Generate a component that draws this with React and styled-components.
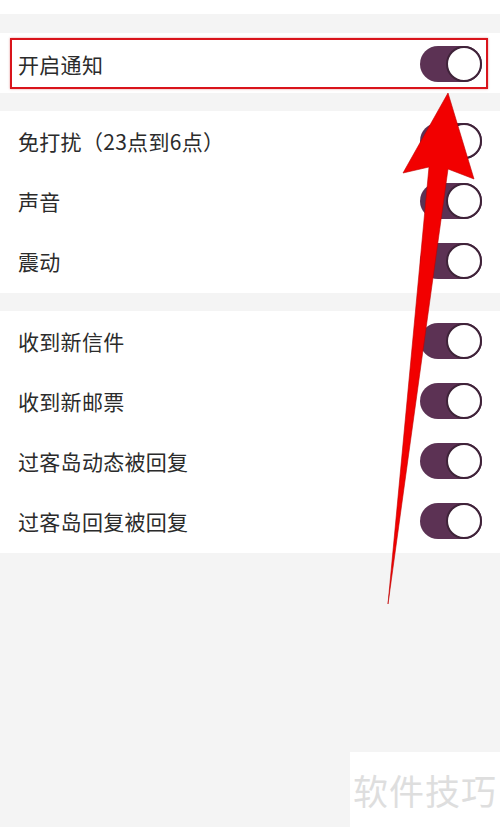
import React from 'react';
import styled, { createGlobalStyle } from 'styled-components';

const GlobalStyle = createGlobalStyle`
  html, body {
    margin: 0;
    padding: 0;
    background: #f4f4f4;
    font-family: "Noto Sans CJK SC", "Noto Sans", sans-serif;
  }
  #root {
    min-height: 827px;
  }
`;

const Page = styled.div`
  position: relative;
  width: 500px;
  min-height: 827px;
  background: #f4f4f4;
  overflow: hidden;
`;

const TopStrip = styled.div`
  height: 14px;
  background: #ffffff;
  margin-bottom: 19px;
`;

const Section = styled.div`
  background: #ffffff;
  margin-bottom: 18px;
  padding: ${(p) => (p.$highlight ? '5px 12px 4px 10px' : '0 0 2px')};
`;

const HighlightBox = styled.div`
  border: 2px solid #d9141b;
  box-shadow: 0 0 2px rgba(200, 40, 40, 0.5);
`;

const Row = styled.div`
  display: flex;
  align-items: center;
  justify-content: space-between;
  height: ${(p) => (p.$compact ? '47px' : '60px')};
  padding: ${(p) => (p.$compact ? '0 4px 0 6px' : '0 18px')};
`;

const Label = styled.span`
  font-size: 21px;
  color: #2b2b2b;
  letter-spacing: 0.3px;
`;

const Track = styled.div`
  position: relative;
  width: 62px;
  height: 36px;
  border-radius: 18px;
  background: #5c3254;
`;

const Knob = styled.div`
  position: absolute;
  top: 0;
  right: 0;
  width: 32px;
  height: 32px;
  border-radius: 50%;
  background: #ffffff;
  border: 2px solid #3f2339;
`;

const ArrowLayer = styled.svg`
  position: absolute;
  left: 0;
  top: 0;
  width: 500px;
  height: 827px;
  pointer-events: none;
`;

const Watermark = styled.div`
  position: absolute;
  right: 0;
  bottom: 0;
  width: 150px;
  height: 75px;
  background: #ffffff;
  display: flex;
  align-items: center;
  justify-content: center;
  font-size: 35px;
  color: #dedede;
  letter-spacing: 1px;
`;

function Toggle() {
  return (
    <Track>
      <Knob />
    </Track>
  );
}

const groupTwo = ['免打扰（23点到6点）', '声音', '震动'];
const groupThree = ['收到新信件', '收到新邮票', '过客岛动态被回复', '过客岛回复被回复'];

export default function App() {
  return (
    <>
      <GlobalStyle />
      <Page>
        <TopStrip />
        <Section $highlight>
          <HighlightBox>
            <Row $compact>
              <Label>开启通知</Label>
              <Toggle />
            </Row>
          </HighlightBox>
        </Section>
        <Section>
          {groupTwo.map((t) => (
            <Row key={t}>
              <Label>{t}</Label>
              <Toggle />
            </Row>
          ))}
        </Section>
        <Section>
          {groupThree.map((t) => (
            <Row key={t}>
              <Label>{t}</Label>
              <Toggle />
            </Row>
          ))}
        </Section>
        <ArrowLayer viewBox="0 0 500 827">
          <polygon
            points="448,93 474,179 448,169 388,604 429,167 403,173"
            fill="#f20000"
            stroke="#c00000"
            strokeWidth="0.6"
            strokeLinejoin="round"
          />
        </ArrowLayer>
        <Watermark>软件技巧</Watermark>
      </Page>
    </>
  );
}
